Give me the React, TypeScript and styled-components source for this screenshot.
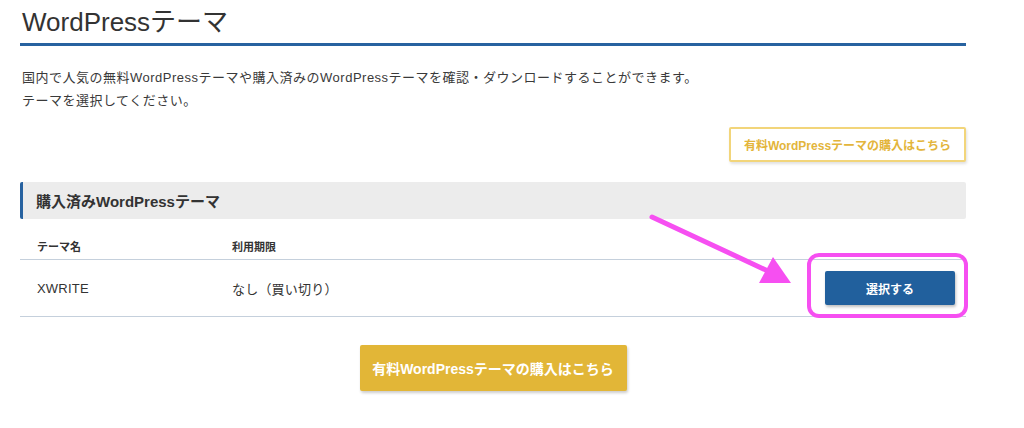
import * as React from 'react';
import styled, { createGlobalStyle } from 'styled-components';

const GlobalStyle = createGlobalStyle`
  html, body {
    margin: 0;
    padding: 0;
    background: #fff;
  }
  body {
    font-family: "Liberation Sans", "Noto Sans CJK JP", sans-serif;
    color: #333;
  }
`;

const Page = styled.div`
  position: relative;
  width: 1024px;
  height: 428px;
  overflow: hidden;
`;

const Content = styled.div`
  width: 946px;
  padding-left: 20px;
`;

const Title = styled.h1`
  margin: 0;
  padding: 5px 0 4px 2px;
  font-size: 26px;
  line-height: 34px;
  font-weight: 400;
  color: #333;
  border-bottom: 3px solid #2762a0;
`;

const Lead = styled.p`
  margin: 20px 0 0 2px;
  font-size: 13px;
  line-height: 23px;
  letter-spacing: 0.5px;
  color: #3a3a3a;
`;

const TopActions = styled.div`
  display: flex;
  justify-content: flex-end;
  margin-top: 15px;
`;

const OutlineButton = styled.button`
  width: 237px;
  height: 35px;
  border: 2px solid #f2d57a;
  border-radius: 2px;
  background: #fff;
  color: #e3b53b;
  font-family: inherit;
  font-size: 12px;
  font-weight: 700;
  box-shadow: 1px 2px 3px rgba(0, 0, 0, 0.12);
`;

const SectionHeader = styled.h2`
  margin: 20px 0 0;
  height: 37px;
  display: flex;
  align-items: center;
  padding-left: 13px;
  background: #ececec;
  border-left: 3px solid #2762a0;
  border-radius: 2px;
  font-size: 15px;
  font-weight: 700;
  color: #333;
`;

const Row = styled.div<{ head?: boolean }>`
  display: grid;
  grid-template-columns: 195px 1fr auto;
  align-items: center;
  padding: ${({ head }) => (head ? '20px 11px 4px 17px' : '0 11px 0 17px')};
  height: ${({ head }) => (head ? 'auto' : '56px')};
  border-bottom: 1px solid #c5d0dc;
`;

const HeadCell = styled.div`
  font-size: 11px;
  line-height: 16px;
  font-weight: 700;
  color: #333;
`;

const Cell = styled.div`
  font-size: 13px;
  letter-spacing: 0.2px;
  color: #333;
`;

const SelectButton = styled.button`
  width: 130px;
  height: 34px;
  border: none;
  border-radius: 2px;
  background: #21609d;
  color: #fff;
  font-family: inherit;
  font-size: 12px;
  font-weight: 700;
  box-shadow: 1px 2px 3px rgba(0, 0, 0, 0.25);
`;

const BottomActions = styled.div`
  display: flex;
  justify-content: center;
  margin-top: 28px;
`;

const BuyButton = styled.button`
  width: 267px;
  height: 46px;
  border: none;
  border-radius: 2px;
  background: #e2b637;
  color: #fff;
  font-family: inherit;
  font-size: 14px;
  font-weight: 700;
  box-shadow: 1px 2px 3px rgba(0, 0, 0, 0.2);
`;

const Annotation = styled.svg`
  position: absolute;
  left: 0;
  top: 0;
  pointer-events: none;
`;

const pink = '#f64ff1';

export default function App() {
  return (
    <Page>
      <GlobalStyle />
      <Content>
        <Title>WordPressテーマ</Title>
        <Lead>
          国内で人気の無料WordPressテーマや購入済みのWordPressテーマを確認・ダウンロードすることができます。
          <br />
          テーマを選択してください。
        </Lead>
        <TopActions>
          <OutlineButton>有料WordPressテーマの購入はこちら</OutlineButton>
        </TopActions>
        <SectionHeader>購入済みWordPressテーマ</SectionHeader>
        <Row head>
          <HeadCell>テーマ名</HeadCell>
          <HeadCell>利用期限</HeadCell>
          <span />
        </Row>
        <Row>
          <Cell>XWRITE</Cell>
          <Cell>なし（買い切り）</Cell>
          <SelectButton>選択する</SelectButton>
        </Row>
        <BottomActions>
          <BuyButton>有料WordPressテーマの購入はこちら</BuyButton>
        </BottomActions>
      </Content>
      <Annotation width="1024" height="428" viewBox="0 0 1024 428">
        <rect x="809" y="255" width="157" height="61" rx="10" fill="none" stroke={pink} strokeWidth="4" />
        <line x1="652" y1="217" x2="768" y2="271" stroke={pink} strokeWidth="5" strokeLinecap="round" />
        <polygon points="759,283 773,257 791,283" fill={pink} />
      </Annotation>
    </Page>
  );
}
